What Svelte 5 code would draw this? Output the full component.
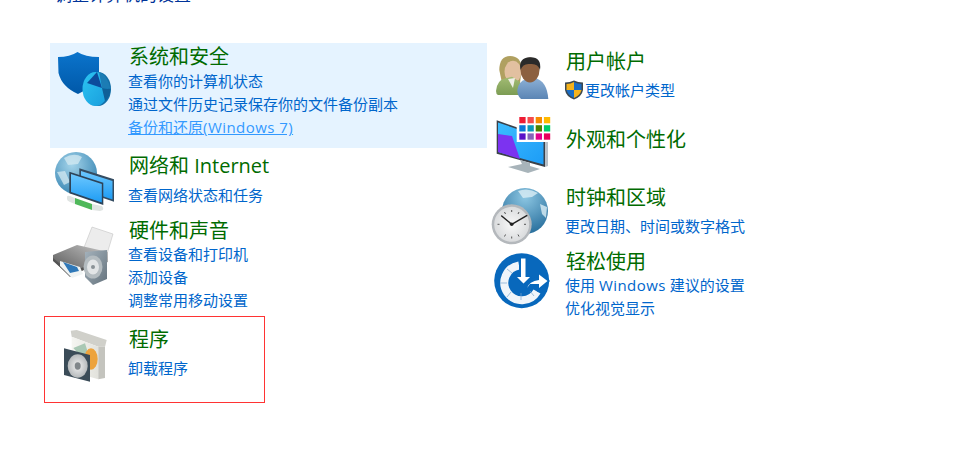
<script>
  const left = [
    { title: '系统和安全', icon: 'shield', links: ['查看你的计算机状态', '通过文件历史记录保存你的文件备份副本', '备份和还原(Windows 7)'], cls: 'security' },
    { title: '网络和 Internet', icon: 'net', links: ['查看网络状态和任务'], cls: 'network' },
    { title: '硬件和声音', icon: 'printer', links: ['查看设备和打印机', '添加设备', '调整常用移动设置'], cls: 'hardware' },
    { title: '程序', icon: 'prog', links: ['卸载程序'], cls: 'programs' }
  ];
  const right = [
    { title: '用户帐户', icon: 'users', links: ['更改帐户类型'], cls: 'accounts', uac: true },
    { title: '外观和个性化', icon: 'display', links: [], cls: 'appearance' },
    { title: '时钟和区域', icon: 'clock', links: ['更改日期、时间或数字格式'], cls: 'clockr' },
    { title: '轻松使用', icon: 'ease', links: ['使用 Windows 建议的设置', '优化视觉显示'], cls: 'ease' }
  ];
  const swatches = ['#ee1c34','#f54b4b','#f68b00','#ffb900','#0a78d7','#0a99b8','#4c8200','#00cc6a','#5a10c8','#8764b8','#e3008c','#e8005a'];
  const parts = (s) => s.split(/(\(Windows 7\)|Windows)/);
</script>

{#snippet icon(name)}
  {#if name === 'shield'}
    <svg class="ic" width="64" height="64" viewBox="0 0 64 64">
      <defs>
        <linearGradient id="sh" x1="0" y1="0" x2="0" y2="1"><stop offset="0" stop-color="#0b74cc"/><stop offset="1" stop-color="#0058a8"/></linearGradient>
        <linearGradient id="pie" x1="0" y1="0" x2="1" y2="1"><stop offset="0" stop-color="#2cc4f2"/><stop offset="1" stop-color="#189cdc"/></linearGradient>
      </defs>
      <path d="M8 6 Q20 6 27.500 1 Q35 6 49 6 V24 Q44 36 28 43 Q12 36 8.500 22 Z" fill="url(#sh)"/>
      <ellipse cx="48" cy="38" rx="13" ry="17" fill="#136fa8"/>
      <ellipse cx="45.500" cy="38" rx="13" ry="17" fill="url(#pie)"/>
      <path d="M47 21 L52 37 L37 32 Z" fill="#0c4c9c"/>
      <path d="M49 21 Q58 25 60.500 38 L52 37 Z" fill="#1c7cb4"/>
      <path d="M52 37 L60.500 38 Q60 46 55 50 Z" fill="#0f5f98"/>
    </svg>
  {:else if name === 'net'}
    <svg class="ic" width="64" height="64" viewBox="0 0 64 64">
      <defs>
        <radialGradient id="gl" cx=".4" cy=".3" r=".8"><stop offset="0" stop-color="#a4d4ea"/><stop offset="1" stop-color="#2f7fae"/></radialGradient>
        <linearGradient id="scr" x1="0" y1="0" x2="0" y2="1"><stop offset="0" stop-color="#6cc8ff"/><stop offset="1" stop-color="#1e9cf4"/></linearGradient>
      </defs>
      <circle cx="26" cy="21" r="21" fill="url(#gl)"/>
      <path d="M14 6 Q24 0 32 5 L28 12 L18 13 Z M7 20 L15 19 L20 30 L14 33 Z" fill="#d4e9f2" opacity=".75"/>
      <path d="M29.300 16.300 L64 27.300 V49.700 L29.300 38 Z" fill="#344c62"/>
      <path d="M31 19 L62.500 29 V47.500 L31 37 Z" fill="url(#scr)"/>
      <path d="M19.300 19.700 L53.300 30.700 V53 L19.300 41.300 Z" fill="#2d4358"/>
      <path d="M21 22 L51.800 32 V50.500 L21 40 Z" fill="url(#scr)"/>
      <path d="M17 45 Q17 43 20 44 L25 46 V52 L20 50 Q17 49 17 47 Z" fill="#dfe4e2"/>
      <path d="M25 46 L42 52 V58 L25 52 Z" fill="#4fb85a"/>
      <path d="M42 52 L52 54 Q54 56 53 58 L50 59 L42 58 Z" fill="#dfe4e2"/>
    </svg>
  {:else if name === 'printer'}
    <svg class="ic" width="64" height="64" viewBox="0 0 64 64">
      <defs>
        <linearGradient id="pb" x1="1" y1="0" x2="0" y2="1"><stop offset="0" stop-color="#c8c8c8"/><stop offset="1" stop-color="#4c4c4c"/></linearGradient>
        <linearGradient id="sp" x1="0" y1="0" x2="1" y2="1"><stop offset="0" stop-color="#a4b2bc"/><stop offset="1" stop-color="#66747e"/></linearGradient>
      </defs>
      <path d="M42 5 L63 12 L57 32 L33 28 Z" fill="#ececec" stroke="#bbb" stroke-width=".5"/>
      <path d="M3 33 L27 23 L58 30 V40 L33 48 L20 55 L3 38 Z" fill="url(#pb)"/>
      <path d="M3 36 L20 50 L34 45 V48 L20 54 L3 39 Z" fill="#555"/>
      <path d="M10 39 L30 45 L33 52 L22 56 L10 44 Z" fill="#f0f4f4"/>
      <path d="M13 40 L27 45 L29 49 L20 51 Z" fill="#2f78b8"/>
      <path d="M35 30 L57 28 V57 L43 63 L35 55 Z" fill="url(#sp)"/>
      <ellipse cx="43" cy="45" rx="9.500" ry="11.500" fill="#b4bcc0"/>
      <ellipse cx="43" cy="45" rx="6" ry="7.500" fill="#e2e5e6"/>
      <circle cx="43" cy="45" r="2" fill="#8a9296"/>
    </svg>
  {:else if name === 'prog'}
    <svg class="ic" width="64" height="64" viewBox="0 0 64 64">
      <defs>
        <linearGradient id="bx" x1="0" y1="0" x2="1" y2="0"><stop offset="0" stop-color="#f6f6f2"/><stop offset="1" stop-color="#e2e2dc"/></linearGradient>
        <radialGradient id="cd" cx=".5" cy=".5" r=".55"><stop offset="0" stop-color="#f2f2f2"/><stop offset="1" stop-color="#b0b4b6"/></radialGradient>
      </defs>
      <path d="M10.700 2.700 L16.700 2 L46.700 12 L45 18.700 L38.300 18.700 L11.700 8.700 Z" fill="#d0d0ca"/>
      <path d="M11.700 8.700 L38.300 18.700 V51.300 L11.700 43.700 Z" fill="url(#bx)"/>
      <path d="M38.300 18.700 L45 18.700 V50 L38.300 51.300 Z" fill="#c4c4be"/>
      <path d="M13.300 20 L25 15.300 L33.300 42 Z" fill="#a9c8b4"/>
      <ellipse cx="31" cy="31" rx="6.700" ry="10.700" fill="#eda33c"/>
      <path d="M4 20.300 L30 27 V53.700 L4 47 Z" fill="#3b4c58"/>
      <ellipse cx="17.700" cy="38" rx="10" ry="11.700" fill="url(#cd)"/>
      <ellipse cx="17.700" cy="38" rx="3" ry="3.700" fill="#80868a"/>
    </svg>
  {:else if name === 'users'}
    <svg class="ic" width="64" height="64" viewBox="0 0 64 64">
      <defs>
        <linearGradient id="ug" x1="0" y1="0" x2="0" y2="1"><stop offset="0" stop-color="#a3bc74"/><stop offset="1" stop-color="#7c9c54"/></linearGradient>
        <linearGradient id="ub" x1="0" y1="0" x2="0" y2="1"><stop offset="0" stop-color="#8cb0d6"/><stop offset="1" stop-color="#5b85b4"/></linearGradient>
      </defs>
      <path d="M9.300 20 Q9.500 6 20 6 Q31.700 6 31.700 20 L30 33 H12 Z" fill="#b0a060"/>
      <ellipse cx="23" cy="21.700" rx="8.500" ry="11" fill="#e2c0a0"/>
      <path d="M6 41 Q7 30 15 28.500 L22 26.700 L30 32 L32 45 H8 Q6 44 6 41 Z" fill="url(#ug)"/>
      <path d="M18 29 L23 38 L25 28 Z" fill="#f0f0e8"/>
      <path d="M27.300 40 Q28 32 36 29 L45 28 Q57 31 58.300 49 H31 Q27.300 46 27.300 40 Z" fill="url(#ub)"/>
      <ellipse cx="40" cy="20" rx="9.500" ry="12.500" fill="#8c6040"/>
      <path d="M30.500 20 Q28 8 40 7.300 Q52 7 50 20 Q48 13 40 14 Q33 13 30.500 20 Z" fill="#2a2a2a"/>
    </svg>
  {:else if name === 'display'}
    <svg class="ic" width="64" height="64" viewBox="0 0 64 64">
      <defs><linearGradient id="dsp" x1="0" y1="0" x2="1" y2="1"><stop offset="0" stop-color="#3dbcff"/><stop offset="1" stop-color="#1c9cf6"/></linearGradient></defs>
      <path d="M6.700 8.300 L55 25 V55 L6.700 41.700 Z" fill="#3a4048"/>
      <path d="M8 10.500 L53.500 26 V52.500 L8 40 Z" fill="url(#dsp)"/>
      <path d="M8 22 L22 24 L30 47 L8 40 Z" fill="#7c33f0"/>
      <path d="M55 25 L58 25 V54 L55 55 Z" fill="#b8c0c8"/>
      <path d="M30 48 L40 51 V54 L50 57 L38 61 L18 55 L32 52 Z" fill="#a8b4ba"/>
      <rect x="26.700" y="3" width="35.600" height="27" fill="#fff"/>
      {#each swatches as c, i}
        <rect x={29.300 + (i % 4) * 8.200} y={5 + Math.floor(i / 4) * 8.200} width="6.300" height="6.300" fill={c}/>
      {/each}
    </svg>
  {:else if name === 'clock'}
    <svg class="ic" width="64" height="64" viewBox="0 0 64 64">
      <defs>
        <radialGradient id="gl2" cx=".5" cy=".2" r=".9"><stop offset="0" stop-color="#8cc6e2"/><stop offset="1" stop-color="#1c6494"/></radialGradient>
        <radialGradient id="face" cx=".5" cy=".5" r=".6"><stop offset="0" stop-color="#f8f8f8"/><stop offset="1" stop-color="#d4d6d8"/></radialGradient>
      </defs>
      <circle cx="35" cy="25" r="23" fill="url(#gl2)"/>
      <path d="M28 5 Q38 1 48 7 L42 11 L33 12 Z M50 18 L57 21 L56 32 L52 28 Z" fill="#dbeef5" opacity=".8"/>
      <circle cx="21.700" cy="38.300" r="20" fill="#b4b8bc"/>
      <circle cx="21.700" cy="38.300" r="17.500" fill="url(#face)"/>
      <path d="M21.700 24 V26 M21.700 50.500 V52.500 M7.500 38.300 H9.500 M34 38.300 H36 M14.500 26 L15.500 28 M29 26 L28 28 M14.500 50.500 L15.500 48.500 M29 50.500 L28 48.500" stroke="#555" stroke-width="1"/>
      <path d="M21.700 38.300 L11.700 30 M21.700 38.300 L36.700 29.700" stroke="#222" stroke-width="1.500" stroke-linecap="round"/>
      <circle cx="21.700" cy="38.300" r="1.800" fill="#222"/>
    </svg>
  {:else if name === 'ease'}
    <svg class="ic" width="64" height="64" viewBox="0 0 64 64">
      <circle cx="31.700" cy="30.700" r="27.500" fill="#0868bc"/>
      <path d="M29 15.500 A17.500 17.500 0 1 0 47 41.500" fill="none" stroke="#f0f5fa" stroke-width="8"/>
      <path d="M17 19 L22 23 M10 33 L17 33 M17 47 L21 42 M31 50 V43 M44 46 L40 41" stroke="#7aa8d0" stroke-width=".7"/>
      <path d="M29 7 H38 V25 H43 L33.500 35 L24 25 H29 Z" fill="#0868bc"/>
      <path d="M31 8.500 H35.500 V27 H40 L33.500 33.500 L27 27 H31 Z" fill="#fff"/>
      <path d="M35 40 Q37 29 47 27 V20 L60 31 L47 42 V36 L38 36 Z" fill="#0868bc"/>
      <path d="M37 38 Q39 31.500 49 30 V24.500 L57.500 31 L49 38 V34 H40 Z" fill="#fff"/>
    </svg>
  {/if}
{/snippet}

{#snippet item(it)}
  <section class="item {it.cls}">
    <div class="icon-cell">{@render icon(it.icon)}</div>
    <div class="body">
      <h2>{it.title}</h2>
      {#each it.links as l, i}
        <div class="link-row">
          {#if it.uac}
            <svg class="uac" width="20" height="20" viewBox="0 0 20 20">
              <path d="M10 .5 Q14 2.500 19 2.500 V10 Q18 16.500 10 19.500 Q2 16.500 1 10 V2.500 Q6 2.500 10 .5 Z" fill="#3c4850"/>
              <path d="M10 2 V10 H2.500 V4 Q7 4 10 2 Z" fill="#f5b21a"/>
              <path d="M10 2 Q13 4 17.500 4 V10 H10 Z" fill="#1a6cc4"/>
              <path d="M2.500 10 H10 V18 Q4 15.500 2.500 10 Z" fill="#1a6cc4"/>
              <path d="M10 10 H17.500 Q16 15.500 10 18 Z" fill="#f5b21a"/>
            </svg>
          {/if}
          <a href="#top" class:hot={it.cls === 'security' && i === 2}>{#each parts(l) as p, j}{#if j % 2}<span class="latin">{p}</span>{:else}{p}{/if}{/each}</a>
        </div>
      {/each}
    </div>
  </section>
{/snippet}

<main class="page">
  <h1>调整计算机的设置</h1>
  <div class="cols">
    <div class="col col-left">
      {#each left as it}{@render item(it)}{/each}
    </div>
    <div class="col col-right">
      {#each right as it}{@render item(it)}{/each}
    </div>
  </div>
</main>

<style>
  :global(body) { margin: 0; background: #fff; overflow: hidden; }
  .page {
    width: 954px; height: 462px; overflow: hidden; background: #fff;
    font-family: "Noto Sans CJK SC", "Noto Sans", sans-serif;
  }
  h1 {
    margin: -20px 0 0 55px; height: 63px; font-size: 17px; font-weight: 400; line-height: 28px; color: #003399;
  }
  .cols { display: flex; align-items: flex-start; }
  .col { display: flex; flex-direction: column; }
  .col-left { width: 437px; margin-left: 50px; }
  .col-right { margin-left: 3px; padding-top: 6px; }
  .item { display: flex; box-sizing: border-box; }
  .icon-cell { flex: none; }
  .col-left .icon-cell { width: 79px; }
  .col-right .icon-cell { width: 76px; }
  .ic { display: block; }
  h2 { margin: 0; font-size: 20px; font-weight: 400; line-height: 26px; color: #006b00; white-space: nowrap; font-family: "Open Sans", "Noto Sans CJK SC", sans-serif; }
  .link-row { display: flex; align-items: center; height: 23px; margin-left: -1px; }
  a { display: block; padding-top: 2px; font-size: 15px; line-height: 23px; color: #0066cc; text-decoration: none; white-space: nowrap; font-family: "Open Sans", "Noto Sans CJK SC", sans-serif; }
  a.hot { color: #3399ff; text-decoration: underline; }
  .latin { letter-spacing: .45px; }
  .uac { margin-right: 1px; margin-left: -1px; }

  .security { height: 105px; background: #e5f3ff; }
  .security .ic { margin-top: 8px; }
  .security .body { padding-top: 1px; }
  .security h2 { margin-bottom: -1px; }

  .network { height: 70px; }
  .network .ic { margin-top: 4px; }
  .network .body { padding-top: 5px; }
  .network .link-row { margin-top: 4px; }

  .hardware { height: 98px; }
  .hardware .ic { margin-top: 4px; }
  .hardware h2 { margin-bottom: -2px; }

  .programs { width: 221px; height: 87px; margin-left: -6px; border: 1px solid #ff3333; }
  .col-left .programs .icon-cell { width: 84px; }
  .programs .ic { margin: 11px 0 0 15px; }
  .programs .body { padding-top: 10px; }
  .programs .link-row { margin-top: 3px; }

  .accounts { height: 63px; }
  .accounts .ic { margin-top: 1px; }
  .accounts .link-row { margin-top: 3px; }

  .appearance { height: 74px; }
  .appearance .body { padding-top: 15px; }

  .clockr { height: 64px; }
  .clockr .body { margin-top: -1px; }
  .clockr .link-row { margin-top: 3px; }

  .ease .body { margin-top: -1px; }
  .ease h2 { margin-bottom: -2px; }
</style>
